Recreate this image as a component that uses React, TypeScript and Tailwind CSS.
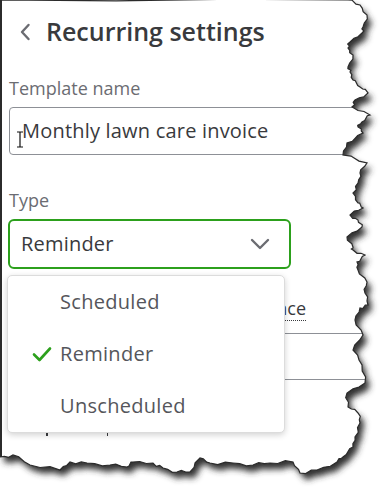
import React from "react";

const rightPts: [number, number][] = [
  [348, 0], [360, 5], [367, 15], [363, 27], [362, 33], [350, 42], [348, 48], [353, 55], [348, 67], [350, 72], [353, 80], [360, 87], [368, 93], [355, 100], [352, 107], [370, 115], [362, 122], [358, 127], [363, 133], [347, 143], [343, 155], [367, 163], [360, 173], [358, 183], [353, 193], [358, 203], [363, 208], [350, 215], [358, 220], [362, 227], [347, 237], [353, 247], [353, 250], [365, 255], [357, 262], [358, 270], [367, 282], [365, 293], [368, 305], [360, 308], [355, 320], [363, 335], [353, 350], [362, 365], [365, 383], [347, 393], [348, 407], [358, 413], [360, 423], [355, 437], [353, 447], [343, 457], [337, 462], [317, 470], [300, 473],
];
const bottomPts: [number, number][] = [
  [293, 462], [270, 463], [253, 465], [233, 463], [210, 463], [200, 458], [190, 472], [177, 472], [163, 468], [153, 463], [133, 462], [127, 467], [110, 465], [87, 463], [70, 462], [60, 470], [30, 465], [13, 455], [0, 457],
];

function jitter(pts: [number, number][]) {
  const out: [number, number][] = [];
  for (let i = 0; i < pts.length; i++) {
    out.push(pts[i]);
    if (i < pts.length - 1) {
      const [x1, y1] = pts[i];
      const [x2, y2] = pts[i + 1];
      const n = 3;
      for (let k = 1; k < n; k++) {
        const t = k / n;
        const d = ((i * 7 + k * 13) % 5) - 2;
        const vertical = Math.abs(y2 - y1) > Math.abs(x2 - x1);
        out.push([
          x1 + (x2 - x1) * t + (vertical ? d * 0.8 : 0),
          y1 + (y2 - y1) * t + (vertical ? 0 : d * 0.8),
        ]);
      }
    }
  }
  return out;
}

const allPts = jitter([[0, 0], ...rightPts, ...bottomPts]);
const paper = "M" + allPts.map(([x, y]) => `${x.toFixed(1)},${y.toFixed(1)}`).join(" L") + " Z";
const outside = "M-10,-10 L401,-10 L401,510 L-10,510 Z " + paper;

function TornEdge() {
  return (
    <svg className="absolute inset-0 pointer-events-none" width="391" height="500" viewBox="0 0 391 500">
      <defs>
        <filter id="blur" x="-10%" y="-10%" width="120%" height="120%">
          <feGaussianBlur stdDeviation="3" />
        </filter>
        <clipPath id="outside">
          <path d={outside} clipRule="evenodd" />
        </clipPath>
      </defs>
      <path d={outside} fill="#ffffff" fillRule="evenodd" />
      <g clipPath="url(#outside)">
        <path d={paper} transform="translate(4,6)" fill="#333" filter="url(#blur)" />
      </g>
      <path d={paper} fill="none" stroke="#2b2b2b" strokeWidth="1.2" />
      <line x1="1" y1="0" x2="1" y2="457" stroke="#2b2b2b" strokeWidth="2" />
    </svg>
  );
}

export default function App() {
  return (
    <div
      className="relative w-[391px] h-[500px] overflow-hidden bg-white text-[#393a3d]"
      style={{ fontFamily: "'Open Sans', Lato, sans-serif" }}
    >
      <div className="flex flex-col pl-[9px]">
        <div className="flex items-center h-[62px] pl-[10px]">
          <svg width="12" height="18" viewBox="0 0 12 18" className="mt-[1px]">
            <path d="M9.5 2 L3 9 L9.5 16" fill="none" stroke="#6b6c72" strokeWidth="2.4" strokeLinecap="round" strokeLinejoin="round" />
          </svg>
          <span className="ml-[15px] text-[25px] font-semibold leading-none text-[#393a3d]">Recurring settings</span>
        </div>
        <div className="mt-[17px] text-[18px] leading-none text-[#6b6c72]">Template name</div>
        <div className="relative mt-[10px] flex items-center h-[48px] w-[380px] border border-[#8d9096] rounded-[4px] pl-[12px]">
          <span className="text-[20px] leading-none tracking-[0.2px] text-[#393a3d]">Monthly lawn care invoice</span>
          <svg className="absolute left-[6px] top-[23px]" width="8" height="17" viewBox="0 0 8 17">
            <path d="M1 1 H7 M4 1 V16 M1 16 H7" fill="none" stroke="#111" strokeWidth="1.2" />
          </svg>
        </div>
        <div className="mt-[36px] text-[18px] leading-none text-[#6b6c72]">Type</div>
        <div className="mt-[10px] flex items-center justify-between h-[50px] w-[283px] -ml-[1px] border-2 border-[#2ca01c] rounded-[6px] pl-[11px] pr-[19px]">
          <span className="text-[20px] leading-none tracking-[0.2px] text-[#393a3d]">Reminder</span>
          <svg width="20" height="12" viewBox="0 0 20 12">
            <path d="M2 2 L10 10 L18 2" fill="none" stroke="#6b6c72" strokeWidth="2.4" strokeLinecap="round" strokeLinejoin="round" />
          </svg>
        </div>
        <div className="mt-[30px] flex w-[297px] justify-end">
          <span className="text-[18px] leading-none text-[#393a3d] border-b border-dotted border-[#393a3d] pb-[3px]">in advance</span>
        </div>
        <div className="mt-[12px] h-[47px] w-[380px] border border-[#8d9096] rounded-[4px]" />
        <div className="mt-[53px] flex pl-[37px] gap-[59px]">
          <span className="w-[1.5px] h-[3px] bg-[#393a3d]" />
          <span className="w-[1.5px] h-[3px] bg-[#393a3d]" />
        </div>
      </div>

      <div className="absolute left-[7px] top-[275px] w-[278px] h-[158px] bg-white border border-[#dcdcdc] rounded-[5px] shadow-[0_2px_6px_rgba(0,0,0,0.18)] flex flex-col">
        {[
          { label: "Scheduled", checked: false },
          { label: "Reminder", checked: true },
          { label: "Unscheduled", checked: false },
        ].map((it) => (
          <div key={it.label} className="flex items-center h-[52px]">
            <div className="w-[52px] flex justify-end pr-[8px]">
              {it.checked && (
                <svg width="20" height="16" viewBox="0 0 20 16">
                  <path d="M2 8.5 L7.5 14 L18 2.5" fill="none" stroke="#2ca01c" strokeWidth="2.6" strokeLinecap="round" strokeLinejoin="round" />
                </svg>
              )}
            </div>
            <span className="text-[20px] leading-none tracking-[0.3px] text-[#55565b]">{it.label}</span>
          </div>
        ))}
      </div>

      <TornEdge />
    </div>
  );
}
